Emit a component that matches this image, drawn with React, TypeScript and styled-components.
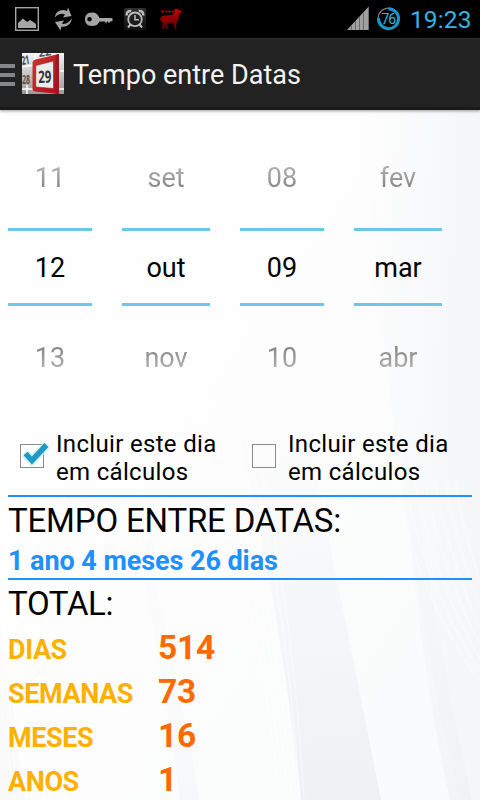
import React from 'react';
import styled, { createGlobalStyle } from 'styled-components';

const Global = createGlobalStyle`
  *{box-sizing:border-box}
  body{margin:0;background:#fdfdfd;overflow:hidden}
`;

const Screen = styled.div`
  position: relative;
  width: 480px;
  height: 800px;
  overflow: hidden;
  display: flex;
  flex-direction: column;
  font-family: Roboto, "Liberation Sans", sans-serif;
  color: #000;
`;

const StatusBar = styled.div`
  height: 38px;
  flex: none;
  background: #000;
  display: flex;
  align-items: center;
  justify-content: space-between;
`;

const StatusIcons = styled.svg`
  display: block;
`;

const StatusRight = styled.div`
  display: flex;
  align-items: center;
  width: 136px;
`;

const Clock = styled.span`
  color: #33b5e5;
  font-size: 24.5px;
  line-height: 38px;
  letter-spacing: 0.1px;
  margin: 2px 0 0 6px;
  white-space: nowrap;
`;

const ActionBar = styled.header`
  height: 72px;
  flex: none;
  display: flex;
  align-items: center;
  background: #222;
  border-top: 1px solid #303030;
  border-bottom: 3px solid #191919;
  box-shadow: 0 1px 3px rgba(0, 0, 0, 0.4);
  z-index: 1;
`;

const Title = styled.h1`
  margin: 3px 0 0 9px;
  font-weight: 400;
  font-size: 27px;
  letter-spacing: 0;
  color: #f3f3f3;
  white-space: nowrap;
`;

const Content = styled.main`
  flex: 1;
  min-height: 0;
  padding: 18px 8px 0;
  position: relative;
`;

const Backdrop = styled.svg`
  position: absolute;
  left: 0;
  top: 0;
  z-index: -1;
`;

const Pickers = styled.div`
  display: grid;
  grid-template-columns: 84px 88px 84px 88px;
  column-gap: 30px;
  height: 281px;
`;

const Picker = styled.div`
  display: grid;
  grid-template-rows: 100px 78px 103px;
  text-align: center;
  font-size: 27px;
`;

const Faded = styled.div<{ $dir: 'top' | 'bottom' }>`
  display: flex;
  align-items: center;
  justify-content: center;
  color: transparent;
  background: linear-gradient(to ${p => p.$dir}, #747474 32%, #c0c0c0 68%);
  background-clip: text;
  -webkit-background-clip: text;
`;

const Selected = styled.div`
  display: flex;
  align-items: center;
  justify-content: center;
  border: solid #6bc8e8;
  border-width: 3px 0;
  padding-top: 1px;
`;

const Checks = styled.div`
  display: grid;
  grid-template-columns: 232px 232px;
  height: 86px;
  padding-top: 21px;
`;

const CheckLabel = styled.label`
  display: flex;
  font-size: 24px;
  line-height: 28px;
  letter-spacing: 0.32px;
  white-space: nowrap;
`;

const CheckIcon = styled.svg`
  width: 48px;
  height: 48px;
  flex: none;
  margin-top: 2px;
`;

const Rule = styled.div`
  height: 2px;
  background: #1e90ff;
`;

const Heading = styled.h2<{ $gap: string }>`
  margin: 0;
  font-weight: 400;
  font-size: 33px;
  line-height: 48px;
  height: 46px;
  letter-spacing: ${p => p.$gap};
  white-space: nowrap;
`;

const Span = styled.div`
  height: 35px;
  line-height: 37px;
  font-size: 27px;
  font-weight: 700;
  letter-spacing: -0.07px;
  color: #1e90ff;
  white-space: nowrap;
`;

const Totals = styled.div`
  display: grid;
  grid-template-columns: 150px 1fr;
  grid-auto-rows: 44px;
  align-items: baseline;
  font-weight: 700;
  line-height: 42px;
  padding-top: 1px;
`;

const Unit = styled.div`
  font-size: 27px;
  letter-spacing: -0.4px;
  color: #ffb000;
`;

const Amount = styled.div`
  font-size: 33.5px;
  letter-spacing: -0.2px;
  color: #ff6a00;
`;

const columns = [
  ['11', '12', '13'],
  ['set', 'out', 'nov'],
  ['08', '09', '10'],
  ['fev', 'mar', 'abr'],
];

const totals = [
  ['DIAS', '514'],
  ['SEMANAS', '73'],
  ['MESES', '16'],
  ['ANOS', '1'],
];

function NotificationIcons() {
  return (
    <StatusIcons width="200" height="38">
      <defs>
        <linearGradient id="llama" x1="0" y1="0" x2="0" y2="1">
          <stop offset="0" stopColor="#c40000" />
          <stop offset="1" stopColor="#500" />
        </linearGradient>
        <linearGradient id="tile" x1="0" y1="0" x2="0" y2="1">
          <stop offset="0" stopColor="#303030" />
          <stop offset="1" stopColor="#101010" />
        </linearGradient>
      </defs>
      <rect x="15.700" y="7.700" width="22.600" height="22.600" fill="none" stroke="#a5a5a5" strokeWidth="1.400" />
      <path d="M18 28v-5l5-4.500 4 3.500 3-2 2.500 1.500 3.500 2.500v4z" fill="#a5a5a5" />
      <g fill="#a5a5a5">
        <path d="M55 17.500c.5-6 6-9 12-6.500l1-3.500 3.500 8.500-8.500 1.500 2-3c-4-1.500-7-.5-10 3z" />
        <path d="M72 18.500c-1 6-6 9-10.500 8l-1 4-5.500-8.500 9-1.500-2 3.300c4 .7 7-1.300 10-5.300z" />
      </g>
      <path fillRule="evenodd" d="M92 12.500c4 0 6 2 7.500 5.500h11.500a1.500 1.500 0 0 1 0 3.500h-1v1h-2v-1h-1v1h-2v-1h-5.500c-1.500 3-3.500 4.500-7.500 4.500-4.500 0-7-2.700-7-6.700s2.500-6.800 7-6.800zm-2.500 4.500a2.300 2.300 0 1 0 .01 4.600 2.300 2.300 0 0 0 0-4.600z" fill="#a5a5a5" />
      <rect x="124" y="8" width="22" height="22" rx="1.500" fill="url(#tile)" />
      <g fill="none" stroke="#bdbdbd">
        <circle cx="135" cy="19.300" r="6.800" strokeWidth="1.800" />
        <path d="M135 15v4.800h4" strokeWidth="1.500" />
        <path d="M126.800 15.500c-.5-3 1.500-5 4.500-4.500M143.200 15.500c.5-3-1.500-5-4.500-4.500" strokeWidth="2.500" />
        <path d="M130.500 24.500l-2.500 3M139.500 24.500l2.500 3" strokeWidth="2" />
      </g>
      <path d="M177.300 8.800l.8 1 2.900.8v2.200l-2 .7-.3 4.500c-.2 2.500-1.200 3.500-2.200 5l-.5 2 .5 4.500h-1.800l-1.200-5.500-2-.7-4 .2-.2 1.500.2 4.500h-1.800l-1-4.500-.9 4.500h-1.500l.3-6-1.800-3.500-1 1c0-3 1.500-5 4.500-5.500l6-.3c2-.2 3.500-1.500 4-3l.5-3.400z" fill="url(#llama)" />
      <path d="M162.500 10v3M166 10v3M169.500 10v3M173 10v3M161 11.500h3M164.500 11.500h3M168 11.500h3M171.500 11.500h3" stroke="#a00000" strokeWidth="1" />
    </StatusIcons>
  );
}

const BatteryText = styled.text`
  font: 14px Roboto, sans-serif;
  letter-spacing: -1px;
`;

function SystemIcons() {
  return (
    <StatusIcons width="60" height="38">
      <path d="M3 30L24.700 6.500V30z" fill="#a0a0a0" />
      <path d="M7.500 26v4M11.500 21v9M15.500 17v13M19.500 13v17" stroke="#6a6a6a" strokeWidth="1" />
      <circle cx="44.500" cy="18.700" r="10.500" fill="none" stroke="#777" strokeWidth="1.200" />
      <path d="M44.500 8.700a10 10 0 1 1-10 9.300" fill="none" stroke="#0f9ace" strokeWidth="3" />
      <BatteryText x="37.500" y="23.700" fill="#33b5e5">76</BatteryText>
    </StatusIcons>
  );
}

const IconText = styled.text<{ $size: number }>`
  font: 700 ${p => p.$size}px "Open Sans", sans-serif;
`;

function AppIcon() {
  return (
    <StatusIcons width="64" height="68">
      <defs>
        <linearGradient id="red" x1="0" x2="1" y1="0" y2="1">
          <stop offset="0" stopColor="#d03535" />
          <stop offset="1" stopColor="#a80f17" />
        </linearGradient>
        <linearGradient id="paper" x1="0" x2="0" y1="0" y2="1">
          <stop offset="0" stopColor="#f4f4f4" />
          <stop offset="1" stopColor="#999" />
        </linearGradient>
        <clipPath id="iconClip"><rect x="22" y="14" width="42" height="41" /></clipPath>
      </defs>
      <path d="M0 27h15M0 36h15M0 45h15" stroke="#84878a" strokeWidth="4" />
      <g clipPath="url(#iconClip)">
        <rect x="22" y="14" width="42" height="41" fill="url(#paper)" />
        <path d="M22 28l12-2M22 50h42M36 14l-2 10M60 32h4M27 46v9" stroke="#fff" strokeWidth="1.500" />
        <IconText $size={12} x="22" y="26" fill="#444" textLength="8" lengthAdjust="spacingAndGlyphs" transform="rotate(-10 22 25)">21</IconText>
        <IconText $size={11} x="39" y="18" fill="#555" transform="rotate(-8 39 18)">22</IconText>
        <IconText $size={13} x="22" y="45" fill="#555" textLength="8" lengthAdjust="spacingAndGlyphs">28</IconText>
        <path d="M32.500 24q0-2.500 3-3.500l23.500-5.500v40l-23.500-2.500q-3 0-3-3z" fill="url(#red)" />
        <path d="M55.500 16l3.500-1v40l-3.500-.5z" fill="#a3161c" />
        <path d="M35.800 26.500l17.700-4.500v27.500l-17.700-1.500z" fill="#ececec" stroke="#9b1b20" strokeWidth=".6" />
        <IconText $size={17} x="38.500" y="44" fill="#333" textLength="13" lengthAdjust="spacingAndGlyphs" transform="rotate(-2 38 43)">29</IconText>
      </g>
    </StatusIcons>
  );
}

function Background() {
  const strands = [0, 1, 2, 3, 4, 5, 6];
  return (
    <Backdrop width="480" height="690" viewBox="0 110 480 690">
      <defs>
        <linearGradient id="base" x1="0" y1="0" x2="1" y2="1">
          <stop offset=".35" stopColor="#fefefe" />
          <stop offset="1" stopColor="#f9fafb" />
        </linearGradient>
        <linearGradient id="band" x1="0" y1="0" x2="0" y2="1">
          <stop offset="0" stopColor="#f2f3f5" stopOpacity="0" />
          <stop offset="1" stopColor="#eeeff1" />
        </linearGradient>
        <linearGradient id="edge" x1="0" y1="0" x2="1" y2="0">
          <stop offset="0" stopColor="#f5f6f8" stopOpacity="0" />
          <stop offset="1" stopColor="#f5f6f8" />
        </linearGradient>
      </defs>
      <rect y="110" width="480" height="690" fill="url(#base)" />
      <path d="M360 110h120v690h-20q-60-240-100-690z" fill="url(#edge)" />
      <path d="M230 400h70q42 200 81 400h-80q-18-180-71-400z" fill="url(#band)" opacity=".9" />
      <path d="M400 400q35 230 72 400h-22q-38-170-50-400z" fill="url(#band)" opacity=".55" />
      <path d="M117 450q50 160 83 350h-20q-20-160-63-350zM0 620q12 80 25 180H0z" fill="url(#band)" opacity=".3" />
      <g fill="none" stroke="#fff" strokeWidth="1" opacity=".55">
        {strands.map(i => <path key={i} d={`M${190 + i * 9} 400q${65 - i * 3} 170 ${90 - i * 5} 400`} />)}
        {strands.map(i => <path key={`r${i}`} d={`M${395 + i * 10} 480q20 120 ${105 - i * 4} 230`} />)}
        {strands.map(i => <path key={`l${i}`} d={`M${-15 + i * 4} 600q12 80 ${30 + i} 200`} />)}
      </g>
    </Backdrop>
  );
}

export default function App() {
  return (
    <Screen>
      <Global />
      <StatusBar>
        <NotificationIcons />
        <StatusRight>
          <SystemIcons />
          <Clock>19:23</Clock>
        </StatusRight>
      </StatusBar>
      <ActionBar>
        <AppIcon />
        <Title>Tempo entre Datas</Title>
      </ActionBar>
      <Content>
        <Background />
        <Pickers>
          {columns.map(([prev, current, next]) => (
            <Picker key={current}>
              <Faded $dir="top">{prev}</Faded>
              <Selected>{current}</Selected>
              <Faded $dir="bottom">{next}</Faded>
            </Picker>
          ))}
        </Pickers>
        <Checks>
          {[true, false].map(on => (
            <CheckLabel key={String(on)}>
              <CheckIcon viewBox="0 0 48 48">
                <rect x="12.500" y="12.500" width="23" height="23" fill="none" stroke="#8a8a8a" />
                {on && (
                  <>
                    <path d="M17 21.500l6.500 7L39 13" fill="none" stroke="#c9edfa" strokeWidth="9" opacity=".75" />
                    <path d="M17.500 21.500l6.500 7L38.500 13" fill="none" stroke="#1f9ac8" strokeWidth="5.500" />
                  </>
                )}
              </CheckIcon>
              <span>Incluir este dia<br />em cálculos</span>
            </CheckLabel>
          ))}
        </Checks>
        <Rule />
        <Heading $gap="-0.17px">TEMPO ENTRE DATAS:</Heading>
        <Span>1 ano 4 meses 26 dias</Span>
        <Rule />
        <Heading $gap="-0.35px">TOTAL:</Heading>
        <Totals>
          {totals.map(([unit, amount]) => (
            <React.Fragment key={unit}>
              <Unit>{unit}</Unit>
              <Amount>{amount}</Amount>
            </React.Fragment>
          ))}
        </Totals>
      </Content>
    </Screen>
  );
}
